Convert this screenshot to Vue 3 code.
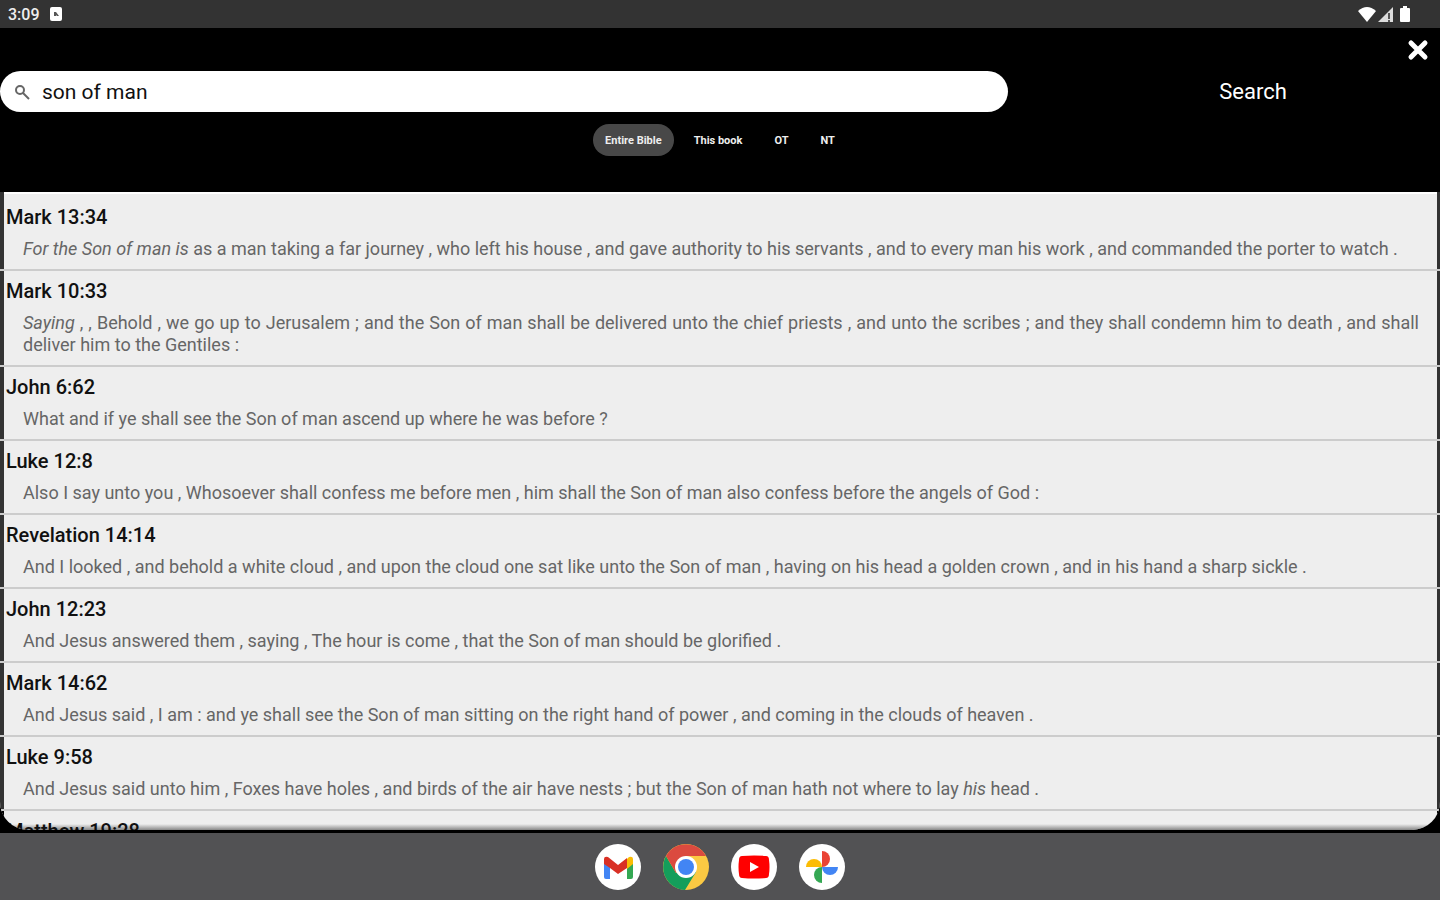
<template>
  <div class="screen">
    <div class="status-bar">
      <div class="status-group">
        <span class="clock">3:09</span>
        <svg width="12" height="14" viewBox="0 0 12 14">
          <rect width="12" height="14" rx="2" fill="#fff" />
          <path d="M4 9V5h2l3 4H7L6 8v1z" fill="#555" />
        </svg>
      </div>
      <div class="status-group status-icons">
        <svg width="18" height="15" viewBox="0 0 18 15">
          <path d="M0 4Q9-4 18 4L9 15z" fill="#fff" />
        </svg>
        <svg width="15" height="15" viewBox="0 0 15 15">
          <path d="M0 15L15 0v15z" fill="#ddd" />
          <path d="M11 6v6M11 13v2" stroke="#555" stroke-width="2" />
        </svg>
        <svg class="battery" width="10" height="16" viewBox="0 0 10 16">
          <path d="M3 0h4v2h2q1 0 1 1v12q0 1-1 1H1q-1 0-1-1V3q0-1 1-1h2z" fill="#fff" />
        </svg>
      </div>
    </div>

    <header class="header">
      <div class="close-row">
        <button type="button" class="close-button" aria-label="Close">
          <svg width="22" height="22" viewBox="0 0 22 22">
            <path d="M4 4l14 14M18 4L4 18" stroke="#fff" stroke-width="5" stroke-linecap="round" />
          </svg>
        </button>
      </div>
      <form class="search-form" @submit.prevent>
        <label class="search-box">
          <svg width="16" height="16" viewBox="0 0 16 16" fill="none" stroke="#666" stroke-width="2">
            <circle cx="6" cy="6" r="4" />
            <path d="M9 9l6 6" />
          </svg>
          <input v-model="query" type="text" class="search-input" aria-label="Search text" />
        </label>
        <button type="submit" class="search-button">Search</button>
      </form>
      <nav class="scopes">
        <button
          v-for="item in scopes"
          :key="item"
          type="button"
          class="scope"
          :class="{ active: item === scope }"
          @click="scope = item"
        >
          {{ item }}
        </button>
      </nav>
    </header>

    <main class="results">
      <article v-for="result in results" :key="result.title" class="result">
        <h2 class="result-title">{{ result.title }}</h2>
        <p class="result-text">
          <template v-for="(part, i) in result.parts" :key="i">
            <em v-if="part.italic">{{ part.text }}</em>
            <template v-else>{{ part.text }}</template>
          </template>
        </p>
      </article>
    </main>

    <footer class="dock">
      <button type="button" class="app" aria-label="Gmail">
        <svg viewBox="0 0 46 46">
          <circle cx="23" cy="23" r="23" fill="#fff" />
          <path d="M9 16v17q0 2 2 2h4V18z" fill="#4285f4" />
          <path d="M38 16v17q0 2-2 2h-4V18z" fill="#34a853" />
          <path d="M32 15l2-2q4-1 4 2v5l-6 5z" fill="#fbbc04" />
          <path d="M9 20v-5q0-3 4-2l10 8 9-7v10l-9 6-8-6z" fill="#d93025" />
        </svg>
      </button>
      <button type="button" class="app" aria-label="Chrome">
        <svg viewBox="0 0 46 46">
          <circle cx="23" cy="23" r="23" fill="#fbc943" />
          <path d="M3 12A23 23 0 0 0 22 46L33 28 23 23 13 29z" fill="#149e5b" />
          <path d="M3 12A23 23 0 0 1 43 12H23L13 29z" fill="#db4a3f" />
          <circle cx="23" cy="23" r="11" fill="#fff" />
          <circle cx="23" cy="23" r="8" fill="#4285f4" />
        </svg>
      </button>
      <button type="button" class="app" aria-label="YouTube">
        <svg viewBox="0 0 46 46">
          <circle cx="23" cy="23" r="23" fill="#fff" />
          <path d="M11 12q12-1 24 0 3 0 3 4 1 7 0 14 0 4-3 4-12 1-24 0-3 0-3-4-1-7 0-14 0-4 3-4z" fill="#f00" />
          <path d="M19 18v10l9-5z" fill="#fff" />
        </svg>
      </button>
      <button type="button" class="app" aria-label="Photos">
        <svg viewBox="0 0 46 46">
          <circle cx="23" cy="23" r="23" fill="#fff" />
          <path d="M23 23V7a8 8 0 0 1 0 16z" fill="#ea4335" />
          <path d="M23 23h16a8 8 0 0 1-16 0z" fill="#4285f4" />
          <path d="M23 23v16a8 8 0 0 1 0-16z" fill="#34a853" />
          <path d="M23 23H7a8 8 0 0 1 16 0z" fill="#fbbc04" />
        </svg>
      </button>
    </footer>
  </div>
</template>

<script setup>
import { ref } from 'vue'

const query = ref('son of man')
const scopes = ['Entire Bible', 'This book', 'OT', 'NT']
const scope = ref('Entire Bible')

const results = [
  {
    title: 'Mark 13:34',
    parts: [
      { text: 'For the Son of man is', italic: true },
      { text: ' as a man taking a far journey , who left his house , and gave authority to his servants , and to every man his work , and commanded the porter to watch .' }
    ]
  },
  {
    title: 'Mark 10:33',
    parts: [
      { text: 'Saying', italic: true },
      { text: ' , , Behold , we go up to Jerusalem ; and the Son of man shall be delivered unto the chief priests , and unto the scribes ; and they shall condemn him to death , and shall deliver him to the Gentiles :' }
    ]
  },
  {
    title: 'John 6:62',
    parts: [{ text: 'What and if ye shall see the Son of man ascend up where he was before ?' }]
  },
  {
    title: 'Luke 12:8',
    parts: [{ text: 'Also I say unto you , Whosoever shall confess me before men , him shall the Son of man also confess before the angels of God :' }]
  },
  {
    title: 'Revelation 14:14',
    parts: [{ text: 'And I looked , and behold a white cloud , and upon the cloud one sat like unto the Son of man , having on his head a golden crown , and in his hand a sharp sickle .' }]
  },
  {
    title: 'John 12:23',
    parts: [{ text: 'And Jesus answered them , saying , The hour is come , that the Son of man should be glorified .' }]
  },
  {
    title: 'Mark 14:62',
    parts: [{ text: 'And Jesus said , I am : and ye shall see the Son of man sitting on the right hand of power , and coming in the clouds of heaven .' }]
  },
  {
    title: 'Luke 9:58',
    parts: [
      { text: 'And Jesus said unto him , Foxes have holes , and birds of the air have nests ; but the Son of man hath not where to lay ' },
      { text: 'his', italic: true },
      { text: ' head .' }
    ]
  },
  { title: 'Matthew 19:28', parts: [] }
]
</script>

<style>
body {
  margin: 0;
  background: #000;
}
</style>

<style scoped>
.screen {
  display: flex;
  flex-direction: column;
  height: 100vh;
  overflow: hidden;
  background: #000;
  color: #fff;
  font-family: Roboto, sans-serif;
}

button {
  padding: 0;
  border: none;
  background: none;
  color: inherit;
  font-family: inherit;
  cursor: pointer;
}

svg {
  display: block;
}

.status-bar {
  display: flex;
  justify-content: space-between;
  align-items: center;
  flex-shrink: 0;
  height: 28px;
  padding: 0 30px 0 8px;
  background: #333;
}

.status-group {
  display: flex;
  align-items: center;
  gap: 10px;
}

.status-icons {
  gap: 2px;
}

.battery {
  margin-left: 5px;
}

.clock {
  color: #eee;
  font-size: 16px;
  font-weight: 500;
}

.header {
  flex-shrink: 0;
  padding-bottom: 36px;
}

.close-row {
  display: flex;
  justify-content: flex-end;
  height: 43px;
  padding-right: 11px;
}

.close-button {
  align-self: center;
}

.search-form {
  display: flex;
  align-items: center;
}

.search-box {
  display: flex;
  align-items: center;
  gap: 12px;
  box-sizing: border-box;
  width: 70%;
  height: 41px;
  padding: 0 14px;
  border-radius: 24px;
  background: #fff;
}

.search-input {
  flex: 1;
  padding: 0;
  border: none;
  outline: none;
  background: none;
  color: #111;
  font-family: inherit;
  font-size: 21px;
}

.search-button {
  flex: 1;
  padding-left: 58px;
  font-size: 22px;
}

.scopes {
  display: flex;
  justify-content: center;
  gap: 8px;
  margin-top: 12px;
}

.scope {
  height: 32px;
  padding: 0 12px;
  border-radius: 16px;
  color: #eee;
  font-size: 11px;
  font-weight: 700;
}

.scope.active {
  background: #484848;
}

.results {
  position: relative;
  flex: 1;
  min-height: 0;
  overflow: hidden;
  border-radius: 0 0 28px 28px;
  background: #eee;
}

/* shade along the lower edge of the list */
.results::after {
  content: '';
  position: absolute;
  right: 0;
  bottom: 0;
  left: 0;
  height: 6px;
  background: linear-gradient(transparent, #888);
}

.result {
  padding: 9px 12px 9px 6px;
  border-bottom: 2px solid #ccc;
  box-shadow: inset 4px 0 #333, inset -3px 0 #333;
}

.result:first-child {
  padding-top: 14px;
  box-shadow: inset 4px 0 #333, inset -3px 0 #333, inset 0 2px #fff;
}

.result:last-child {
  box-shadow: inset 4px 0 #000, inset -3px 0 #000;
}

.result-title {
  position: relative;
  z-index: 1;
  margin: 0 0 10px;
  color: #111;
  font-size: 20px;
  font-weight: 500;
  line-height: 22px;
}

.result-text {
  margin: 0 9px 0 17px;
  color: #666;
  font-size: 18px;
  line-height: 22px;
  text-align: justify;
}

.dock {
  display: flex;
  justify-content: center;
  align-items: center;
  gap: 22px;
  flex-shrink: 0;
  height: 67px;
  margin-top: 3px;
  background: #525254;
}

.app {
  width: 46px;
  height: 46px;
}
</style>
